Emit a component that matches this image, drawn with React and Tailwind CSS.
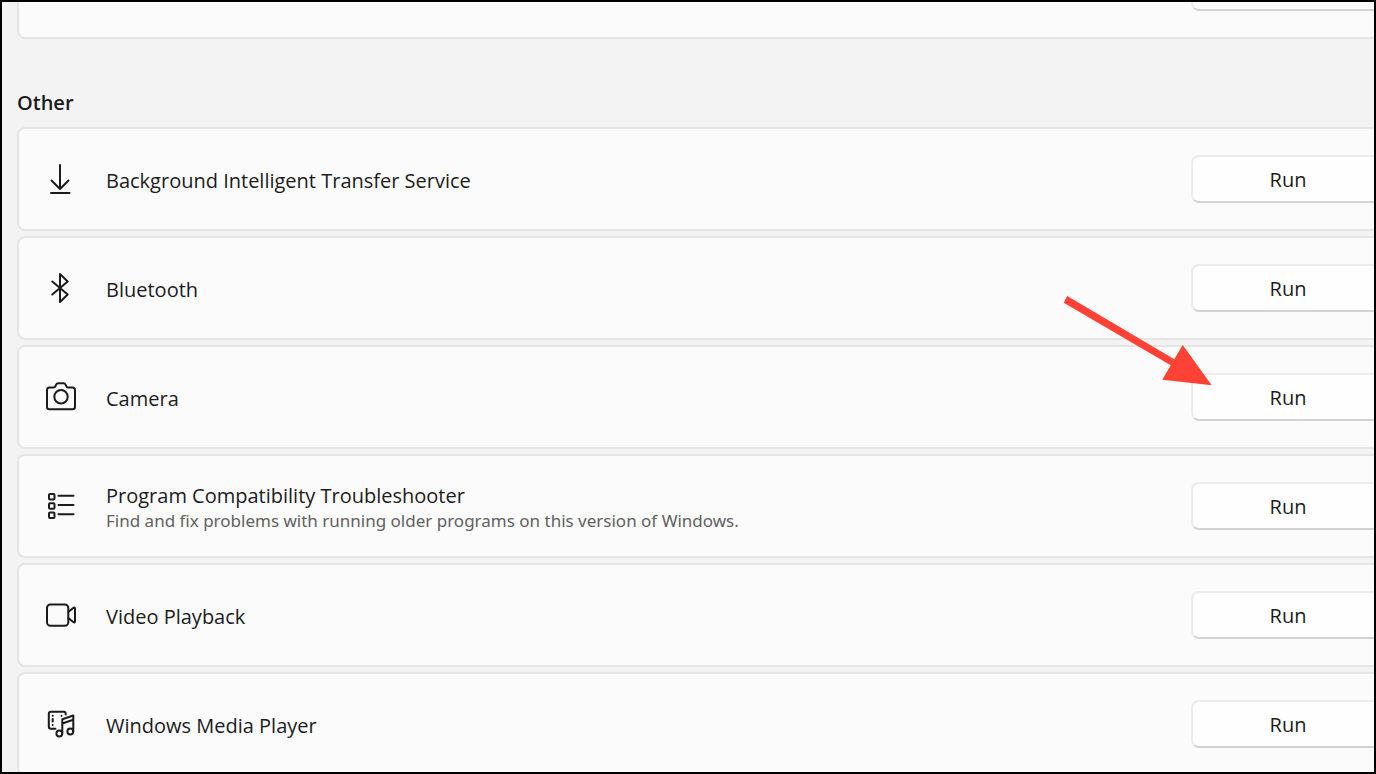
function Icon({ children }) {
  return (
    <svg
      viewBox="0 0 32 32"
      fill="none"
      stroke="currentColor"
      strokeWidth="2"
      strokeLinecap="round"
      strokeLinejoin="round"
      className="size-8 shrink-0"
      aria-hidden="true"
    >
      {children}
    </svg>
  );
}

const troubleshooters = [
  {
    name: "Background Intelligent Transfer Service",
    icon: (
      <Icon>
        <path d="M15 2v24M6.5 17.5 15 26l8.5-8.5M6 30h18.5" />
      </Icon>
    ),
  },
  {
    name: "Bluetooth",
    icon: (
      <Icon>
        <path d="M7.3 9.5 22.7 22.5 15 30V2l7.7 7.5L7.3 22.5" />
      </Icon>
    ),
  },
  {
    name: "Camera",
    pointed: true,
    icon: (
      <Icon>
        <path d="M4.5 6.5H8.5Q10 6.5 10.5 5L11 3.8Q11.7 2.2 13.2 2.2H18.5Q20 2.2 20.7 3.8L21.2 5Q21.7 6.5 23.2 6.5H27.5Q30 6.5 30 9V26Q30 28.3 27.5 28.3H4.5Q2 28.3 2 26V9Q2 6.5 4.5 6.5Z" />
        <circle cx="16" cy="15.7" r="6.7" />
      </Icon>
    ),
  },
  {
    name: "Program Compatibility Troubleshooter",
    description: "Find and fix problems with running older programs on this version of Windows.",
    icon: (
      <Icon>
        <rect x="4" y="4" width="5.5" height="5.5" rx="1" />
        <rect x="4" y="13.3" width="5.5" height="5.5" rx="1" />
        <rect x="4" y="22.6" width="5.5" height="5.5" rx="1" />
        <path d="M13.5 5.7H28.5M13.5 15H28.5M13.5 24.3H28.5" />
      </Icon>
    ),
  },
  {
    name: "Video Playback",
    icon: (
      <Icon>
        <rect x="2" y="5.5" width="21.3" height="21.3" rx="3.5" />
        <path d="M23.3 13 28.5 8.8Q30 8 30 9.8V22.2Q30 24 28.5 23.2L23.3 19" />
      </Icon>
    ),
  },
  {
    name: "Windows Media Player",
    icon: (
      <Icon>
        <path d="M20.7 6.5V5.7Q20.7 3.7 18.7 3.7H6Q3.8 3.7 3.8 5.9V18.5Q3.8 20.7 6 20.7H10.5" />
        <path d="M7.7 7.7V7.8M7.7 11V13.5M7.7 16.9V17M16.5 7.7V7.8" />
        <path d="M17.3 25.3V11.3L28.3 7.5V23.3M17.3 15.5 28.3 11.7" />
        <circle cx="14.3" cy="25.5" r="2.9" />
        <circle cx="25.3" cy="23.5" r="2.9" />
      </Icon>
    ),
  },
];

function Pointer() {
  return (
    <svg
      viewBox="0 0 160 100"
      className="pointer-events-none absolute -top-[83px] -left-[131px] h-[100px] w-[160px]"
      aria-hidden="true"
    >
      <path
        fill="#ff4136"
        d="M7.3 6 114.3 69.3 122.7 55 151.7 95.3 102.3 89.7 110.7 75.3 3.7 12.7Z"
      />
    </svg>
  );
}

function TroubleshooterRow({ item }) {
  return (
    <li className="flex h-[104px] items-center rounded-lg border-2 border-[#e5e5e5] bg-[#fbfbfb] px-[26px]">
      {item.icon}
      <div className="ml-[29px] flex-1 pt-1">
        <h3 className="text-xl leading-[26px]">{item.name}</h3>
        {item.description && (
          <p className="font-['Noto_Sans',sans-serif] text-[17px] leading-6 text-[#616161]">
            {item.description}
          </p>
        )}
      </div>
      <div className="relative">
        <button
          type="button"
          aria-label={`Run ${item.name}`}
          className="h-12 w-[194px] rounded-lg border-2 border-[#ececec] border-b-[#d2d2d2] bg-[#fefefe] pt-[2px] text-xl"
        >
          Run
        </button>
        {item.pointed && <Pointer />}
      </div>
    </li>
  );
}

export default function App() {
  return (
    <main className="h-screen overflow-hidden border-2 border-black bg-[#f3f3f3] pl-[15px] font-['Open_Sans',sans-serif] text-[#1b1b1b]">
      <div className="-mr-[39px]">
        {/* tail end of the previous group, scrolled under the top edge */}
        <div className="flex h-[37px] justify-end rounded-b-lg border-2 border-t-0 border-[#e5e5e5] bg-[#fbfbfb] px-[26px]">
          <button
            type="button"
            aria-label="Run"
            className="h-[9px] w-[194px] rounded-b-lg border-2 border-t-0 border-[#ececec] border-b-[#d2d2d2] bg-[#fefefe]"
          />
        </div>

        <section>
          <h2 className="mt-[50px] mb-[10px] text-xl leading-[28px] font-semibold">Other</h2>
          <ul className="flex flex-col gap-[5px]">
            {troubleshooters.map((item) => (
              <TroubleshooterRow key={item.name} item={item} />
            ))}
          </ul>
        </section>
      </div>
    </main>
  );
}
